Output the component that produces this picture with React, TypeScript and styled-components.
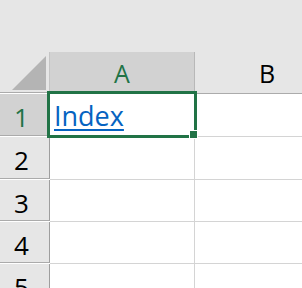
import React from "react";
import styled, { createGlobalStyle } from "styled-components";

const Global = createGlobalStyle`
  html, body { margin: 0; padding: 0; background: #ffffff; overflow: hidden; }
  #root { width: 302px; height: 288px; overflow: hidden; }
`;

const GREEN = "#217346";

const Sheet = styled.div`
  position: relative;
  width: 302px;
  height: 288px;
  overflow: hidden;
  font-family: "Open Sans", "Liberation Sans", sans-serif;
`;

const TopStrip = styled.div`
  height: 52px;
  background: #e6e6e6;
`;

const Grid = styled.div`
  position: relative;
  display: grid;
  grid-template-columns: 50px 145px 145px;
  width: 340px;
`;

const Corner = styled.div`
  height: 40px;
  background: #e6e6e6;
  border-right: 1px solid #c4c4c4;
  border-bottom: 1px solid #ababab;
  box-sizing: content-box;
  width: 49px;
  display: flex;
  align-items: flex-end;
  justify-content: flex-end;
`;

const ColHeader = styled.div<{ $selected?: boolean }>`
  height: 40px;
  box-sizing: content-box;
  background: ${(p) => (p.$selected ? "#d2d2d2" : "#e6e6e6")};
  border-right: 1px solid #b8b8b8;
  border-bottom: 1px solid #ababab;
  display: flex;
  align-items: center;
  justify-content: center;
  font-size: 25px;
  padding-top: 1px;
  color: ${(p) => (p.$selected ? GREEN : "#000000")};
`;

const RowHeader = styled.div<{ $selected?: boolean; $h: number }>`
  height: ${(p) => p.$h - 1}px;
  background: ${(p) => (p.$selected ? "#d2d2d2" : "#e6e6e6")};
  border-right: 1px solid #9e9e9e;
  border-bottom: 1px solid #ababab;
  display: flex;
  align-items: center;
  justify-content: center;
  padding-right: 6px;
  padding-top: 5px;
  box-sizing: border-box;
  font-size: 26px;
  color: ${(p) => (p.$selected ? GREEN : "#000000")};
`;

const Cell = styled.div<{ $h: number }>`
  height: ${(p) => p.$h - 1}px;
  box-sizing: content-box;
  border-right: 1px solid #d4d4d4;
  border-bottom: 1px solid #d4d4d4;
  background: #ffffff;
  display: flex;
  align-items: flex-end;
  padding-left: 4px;
  overflow: hidden;
`;

const Link = styled.span`
  color: #0563c1;
  font-size: 27px;
  line-height: 34px;
  text-decoration: underline;
  text-decoration-thickness: 2px;
  text-underline-offset: 3px;
  margin-bottom: 3px;
`;

const Selection = styled.div`
  position: absolute;
  left: 47px;
  top: 39px;
  width: 150px;
  height: 47px;
  box-sizing: border-box;
  border: 3px solid ${GREEN};
  pointer-events: none;
`;

const FillHandle = styled.div`
  position: absolute;
  left: 189px;
  top: 78px;
  width: 9px;
  height: 9px;
  box-sizing: border-box;
  background: ${GREEN};
  border: 1px solid #ffffff;
`;

const rows = [43, 43, 42, 42, 42];

export default function App() {
  return (
    <Sheet>
      <Global />
      <TopStrip />
      <Grid>
        <Corner>
          <svg width="49" height="40" viewBox="0 0 49 40">
            <polygon points="12,38 46,38 46,4" fill="#b4b4b4" />
          </svg>
        </Corner>
        <ColHeader $selected>A</ColHeader>
        <ColHeader>B</ColHeader>
        {rows.map((h, i) => (
          <React.Fragment key={i}>
            <RowHeader $h={h} $selected={i === 0}>
              {i + 1}
            </RowHeader>
            <Cell $h={h}>{i === 0 ? <Link>Index</Link> : null}</Cell>
            <Cell $h={h} />
          </React.Fragment>
        ))}
        <Selection />
        <FillHandle />
      </Grid>
    </Sheet>
  );
}
